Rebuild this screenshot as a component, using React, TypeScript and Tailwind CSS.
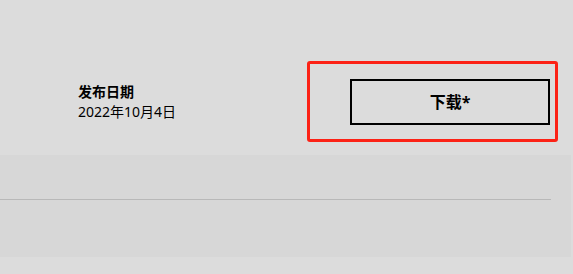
const font = {
  fontFamily: '"Noto Sans", "Noto Sans CJK SC", sans-serif',
};

export default function App() {
  return (
    <div className="w-full h-[274px] bg-[#dcdcdc] text-black" style={font}>
      {/* release info row */}
      <div className="flex items-center h-[155px] pt-[61px] pb-[13px]">
        <div className="w-[307px] pl-[78px] flex flex-col">
          <span className="text-[14px] leading-[18px] font-bold">发布日期</span>
          <span className="text-[14px] leading-[18px] mt-[2px]">2022年10月4日</span>
        </div>
        <div className="w-[251px] h-[81px] border-[3px] border-[#fc2216] rounded-[3px] flex items-center justify-end pr-[5px]">
          <button className="w-[200px] h-[46px] border-2 border-black bg-transparent text-[16px] font-bold flex items-center justify-center">
            下载*
          </button>
        </div>
      </div>

      {/* lower panel */}
      <div className="w-[571px] h-[102px] bg-[#d7d7d7] pt-[44px]">
        <div className="w-[551px] h-px bg-[#b8b8b8]" />
      </div>
    </div>
  );
}
